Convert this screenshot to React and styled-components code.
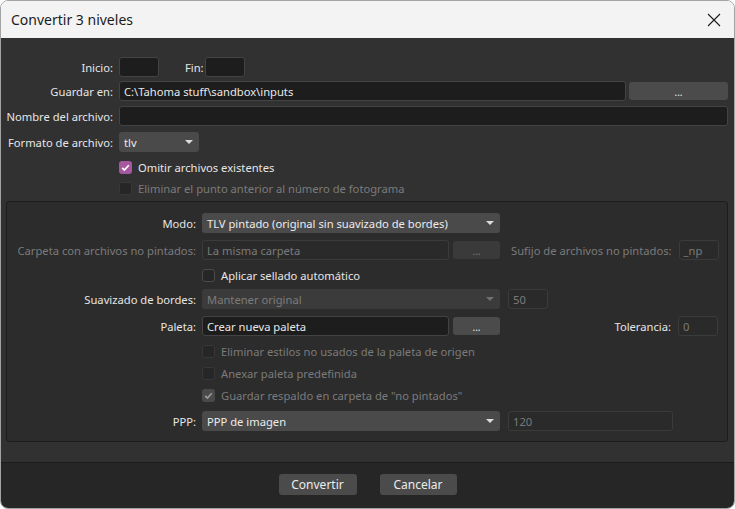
import styled, { createGlobalStyle } from 'styled-components'

const GlobalStyle = createGlobalStyle`
    html, body {
        margin: 0;
        padding: 0;
        background: #ffffff;
    }
    * {
        box-sizing: border-box;
    }
`

const Window = styled.div`
    width: 735px;
    height: 509px;
    border: 1px solid #a3a3a3;
    border-radius: 8px;
    overflow: hidden;
    display: flex;
    flex-direction: column;
    font-family: "Noto Sans", "Open Sans", sans-serif;
    font-size: 11.2px;
    color: #e6e6e6;
`

const TitleBar = styled.div`
    height: 37px;
    flex: none;
    background: #f3f3f3;
    display: flex;
    align-items: center;
    justify-content: space-between;
    padding: 0 13px 0 10px;
`

const Title = styled.span`
    font-size: 14px;
    color: #1b1b1b;
    margin-top: -1px;
`

const CloseButton = styled.div`
    width: 14px;
    height: 14px;
    display: flex;
    align-items: center;
    justify-content: center;
`

const Body = styled.div`
    flex: 1;
    background: #313131;
    padding: 19px 6px 0 5px;
`

const Row = styled.div`
    display: flex;
    align-items: center;
    height: 20px;
    margin-top: ${p => p.$mt || 0}px;
    padding-left: ${p => p.$indent || 0}px;
`

const Label = styled.span`
    width: ${p => p.$w}px;
    flex: none;
    text-align: right;
    margin-right: 6px;
    white-space: nowrap;
    color: ${p => (p.$off ? '#7b7b7b' : '#e6e6e6')};
`

const InlineLabel = styled.span`
    flex: none;
    white-space: nowrap;
    margin: 0 ${p => p.$mr ?? 6}px 0 ${p => p.$ml || 0}px;
    color: ${p => (p.$off ? '#7b7b7b' : '#e6e6e6')};
`

const Field = styled.div`
    height: ${p => p.$h || 20}px;
    width: ${p => (p.$w ? `${p.$w}px` : 'auto')};
    flex: ${p => (p.$w ? 'none' : '1')};
    margin-left: ${p => p.$ml || 0}px;
    background: ${p => (p.$off ? '#2a2a2a' : '#1d1d1d')};
    border: 1px solid ${p => (p.$off ? '#3b3b3b' : '#434343')};
    border-radius: 3px;
    padding: 0 4px;
    display: flex;
    align-items: center;
    white-space: nowrap;
    overflow: hidden;
    color: ${p => (p.$off ? '#7b7b7b' : '#e8e8e8')};
`

const Select = styled.div`
    height: 20px;
    width: ${p => p.$w}px;
    flex: none;
    background: ${p => (p.$off ? '#3b3b3b' : '#4a4a4a')};
    border-radius: 3px;
    padding: 0 6px 0 5px;
    display: flex;
    align-items: center;
    justify-content: space-between;
    white-space: nowrap;
    color: ${p => (p.$off ? '#7b7b7b' : '#ececec')};
`

const Arrow = styled.span`
    width: 0;
    height: 0;
    border-left: 4px solid transparent;
    border-right: 4px solid transparent;
    border-top: 4px solid ${p => (p.$off ? '#6f6f6f' : '#dcdcdc')};
`

const Button = styled.div`
    height: ${p => p.$h || 18}px;
    width: ${p => p.$w}px;
    flex: none;
    margin-left: ${p => p.$ml || 0}px;
    background: ${p => (p.$off ? '#3a3a3a' : '#4b4b4b')};
    border-radius: 3px;
    display: flex;
    align-items: center;
    justify-content: center;
    color: ${p => (p.$off ? '#7b7b7b' : '#ececec')};
    font-size: ${p => p.$fs || 12}px;
`

const Dots = styled.span`
    font-size: 10px;
    line-height: 1;
    margin-top: 2px;
`

const Box = styled.span`
    width: 13px;
    height: 13px;
    flex: none;
    margin-right: 6px;
    border-radius: 3px;
    display: flex;
    align-items: center;
    justify-content: center;
    background: ${p => (p.$checked ? (p.$off ? '#4a4a4a' : '#a6579f') : '#262626')};
    border: 1px solid ${p => (p.$checked ? 'transparent' : p.$off ? '#383838' : '#4a4a4a')};
`

const Frame = styled.div`
    margin-top: 3px;
    border: 1px solid #1c1c1c;
    border-radius: 3px;
    background: #2c2c2c;
    padding: 11px 9px 10px 0;
`

const Spacer = styled.div`
    flex: 1;
`

const Footer = styled.div`
    height: 46px;
    flex: none;
    background: #262626;
    border-top: 1px solid #1b1b1b;
    display: flex;
    align-items: center;
    justify-content: center;
    gap: 23px;
    padding-bottom: 2px;
`

const Check = ({ checked, off, children, mt, indent }) => (
    <Row $mt={mt} $indent={indent}>
        <Box $checked={checked} $off={off}>
            {checked && (
                <svg width="11" height="11" viewBox="0 0 11 11">
                    <polyline points="2.2,5.8 4.4,8 8.8,3.2" fill="none"
                        stroke={off ? '#9a9a9a' : '#ffffff'} strokeWidth="1.7" />
                </svg>
            )}
        </Box>
        <InlineLabel $off={off}>{children}</InlineLabel>
    </Row>
)

const App = () => {
    return (
        <>
            <GlobalStyle />
            <Window>
                <TitleBar>
                    <Title>Convertir 3 niveles</Title>
                    <CloseButton>
                        <svg width="14" height="14" viewBox="0 0 14 14">
                            <path d="M1 1 L13 13 M13 1 L1 13" stroke="#1b1b1b" strokeWidth="1.1" />
                        </svg>
                    </CloseButton>
                </TitleBar>
                <Body>
                    <Row>
                        <Label $w={107}>Inicio:</Label>
                        <Field $w={40} />
                        <InlineLabel $ml={26} $mr={1}>Fin:</InlineLabel>
                        <Field $w={40} />
                    </Row>
                    <Row $mt={4}>
                        <Label $w={107}>Guardar en:</Label>
                        <Field>C:\Tahoma stuff\sandbox\inputs</Field>
                        <Button $w={99} $ml={3}><Dots>...</Dots></Button>
                    </Row>
                    <Row $mt={5}>
                        <Label $w={107}>Nombre del archivo:</Label>
                        <Field />
                    </Row>
                    <Row $mt={6}>
                        <Label $w={107}>Formato de archivo:</Label>
                        <Select $w={80}>tlv<Arrow /></Select>
                    </Row>
                    <Check checked mt={5} indent={113}>Omitir archivos existentes</Check>
                    <Check off mt={1} indent={113}>Eliminar el punto anterior al número de fotograma</Check>

                    <Frame>
                        <Row>
                            <Label $w={189}>Modo:</Label>
                            <Select $w={298}>TLV pintado (original sin suavizado de bordes)<Arrow /></Select>
                        </Row>
                        <Row $mt={7}>
                            <Label $w={189} $off>Carpeta con archivos no pintados:</Label>
                            <Field $w={247} $off>La misma carpeta</Field>
                            <Button $w={47} $ml={4} $off><Dots>...</Dots></Button>
                            <InlineLabel $off $ml={11} $mr={7}>Sufijo de archivos no pintados:</InlineLabel>
                            <Spacer />
                            <Field $w={40} $off>_np</Field>
                        </Row>
                        <Check mt={5} indent={195}>Aplicar sellado automático</Check>
                        <Row $mt={4}>
                            <Label $w={189}>Suavizado de bordes:</Label>
                            <Select $w={298} $off>Mantener original<Arrow $off /></Select>
                            <Field $w={40} $off $ml={8}>50</Field>
                        </Row>
                        <Row $mt={7}>
                            <Label $w={189}>Paleta:</Label>
                            <Field $w={247}>Crear nueva paleta</Field>
                            <Button $w={47} $ml={4}><Dots>...</Dots></Button>
                            <Spacer />
                            <InlineLabel $mr={7}>Tolerancia:</InlineLabel>
                            <Field $w={40} $off>0</Field>
                        </Row>
                        <Check off mt={5} indent={195}>Eliminar estilos no usados de la paleta de origen</Check>
                        <Check off mt={2} indent={195}>Anexar paleta predefinida</Check>
                        <Check off checked mt={2} indent={195}>Guardar respaldo en carpeta de "no pintados"</Check>
                        <Row $mt={6}>
                            <Label $w={189}>PPP:</Label>
                            <Select $w={298}>PPP de imagen<Arrow /></Select>
                            <Field $w={165} $off $ml={8}>120</Field>
                        </Row>
                    </Frame>
                </Body>
                <Footer>
                    <Button $w={78} $h={21}>Convertir</Button>
                    <Button $w={77} $h={21}>Cancelar</Button>
                </Footer>
            </Window>
        </>
    )
}

export default App
